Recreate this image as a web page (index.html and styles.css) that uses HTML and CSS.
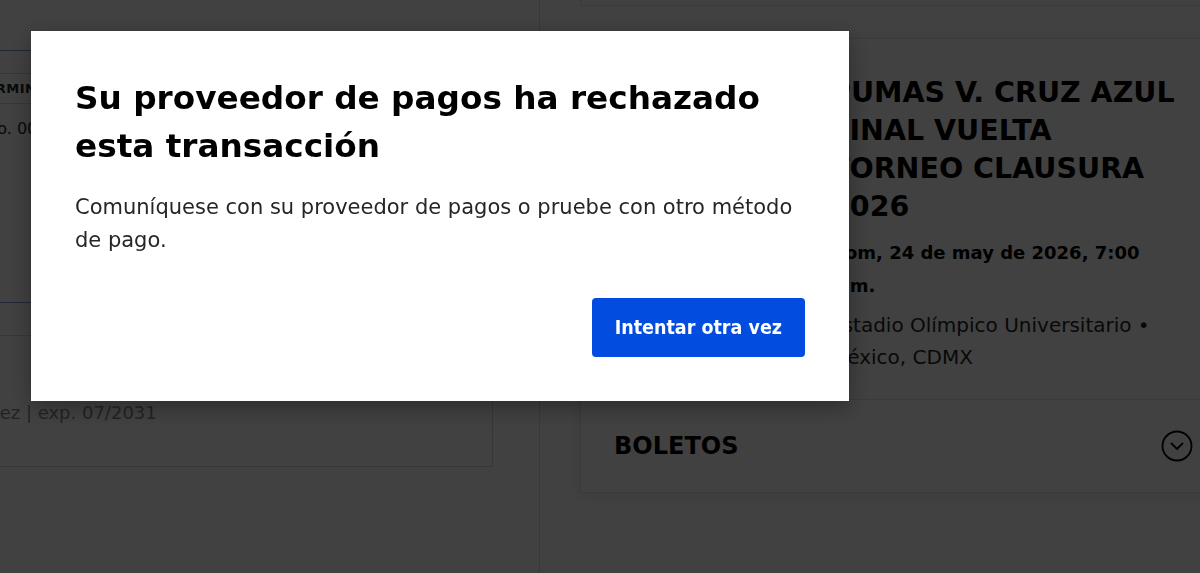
FILE: index.html
```html
<!DOCTYPE html>
<html lang="es">
<head>
<meta charset="utf-8">
<title>Pago</title>
<link rel="stylesheet" href="styles.css">
</head>
<body>
<div class="page">
  <section class="checkout">
    <div class="checkout-inner">
      <div class="pay-card pay-card--selected">
        <table class="card-table">
          <thead>
            <tr><th>Terminación</th><th>Titular</th></tr>
          </thead>
          <tbody>
            <tr><td>Nro. 0000 4242</td><td>Juan López</td></tr>
          </tbody>
        </table>
      </div>
      <div class="pay-card pay-card--saved">
        <p class="pay-meta">López | exp. 07/2031</p>
      </div>
    </div>
  </section>

  <aside class="summary">
    <div class="summary-top"></div>
    <article class="event-card">
      <div class="event-main">
        <div class="event-thumb"></div>
        <div class="event-info">
          <h1 class="event-title">Pumas v. Cruz Azul Final Vuelta Torneo Clausura 2026</h1>
          <p class="event-date">Dom, 24 de may de 2026, 7:00 p.m.</p>
          <p class="event-venue">Estadio Olímpico Universitario • México, CDMX</p>
        </div>
      </div>
      <div class="tickets-row">
        <span class="tickets-label">BOLETOS</span>
        <svg class="chevron-icon" viewBox="0 0 32 32" width="32" height="32" aria-hidden="true">
          <circle cx="16" cy="16" r="14.5" fill="none" stroke="#000" stroke-width="1.8"/>
          <polyline points="10.5,13.5 16,19 21.5,13.5" fill="none" stroke="#000" stroke-width="1.8" stroke-linecap="round" stroke-linejoin="round"/>
        </svg>
      </div>
    </article>
  </aside>
</div>

<div class="overlay">
  <div class="modal" role="dialog" aria-modal="true">
    <h2 class="modal-title">Su proveedor de pagos ha rechazado esta transacción</h2>
    <p class="modal-text">Comuníquese con su proveedor de pagos o pruebe con otro método de pago.</p>
    <div class="modal-actions">
      <button class="btn-primary" type="button">Intentar otra vez</button>
    </div>
  </div>
</div>
</body>
</html>
```

FILE: styles.css
```css
* {
  box-sizing: border-box;
}

body {
  margin: 0;
  height: 573px;
  overflow: hidden;
  background: #fff;
  color: #1f262d;
  font-family: "DejaVu Sans", "Liberation Sans", sans-serif;
}

p {
  margin: 0;
}

/* two-column checkout layout */
.page {
  display: grid;
  grid-template-columns: 540px 1fr;
  height: 573px;
}

.checkout {
  border-right: 1px solid #dcdcdc;
  overflow: hidden;
}

.checkout-inner {
  margin-left: -40px;
  width: 533px;
  padding-top: 50px;
}

.pay-card {
  border: 1px solid #d6d6d6;
  background: #fff;
}

.pay-card--selected {
  height: 253px;
  padding-top: 22px;
  border-color: #7d97dc;
}

.card-table {
  width: 100%;
  border-collapse: collapse;
}

.card-table th {
  height: 30px;
  padding: 0 0 0 16px;
  border-top: 1px solid #d6d6d6;
  border-bottom: 1px solid #d6d6d6;
  text-align: left;
  font-size: 13px;
  font-weight: 700;
  letter-spacing: 0.5px;
  text-transform: uppercase;
  color: #1f262d;
}

.card-table td {
  height: 50px;
  padding: 0 0 0 18px;
  font-size: 16px;
  color: #1f262d;
}

.pay-card--saved {
  margin-top: 32px;
  height: 132px;
  padding: 62px 0 0 6.5px;
}

.pay-meta {
  font-size: 18px;
  line-height: 30px;
  color: #8a8a8a;
}

/* event summary */
.summary {
  padding-left: 40px;
  overflow: hidden;
}

.summary-top {
  height: 6px;
  margin-right: -26px;
  border: 1px solid #e2e2e2;
  border-top: 0;
  background: #fff;
}

.event-card {
  margin-top: 32px;
  margin-right: -26px;
  border: 1px solid #e2e2e2;
  background: #fff;
  box-shadow: 0 2px 12px rgba(0, 0, 0, 0.12);
}

.event-main {
  display: grid;
  grid-template-columns: 193px 1fr;
  column-gap: 24px;
  padding: 35px 40px 26px 32px;
  border-bottom: 1px solid #e2e2e2;
}

.event-thumb {
  height: 130px;
  border-radius: 4px;
  background: #c9ced6;
}

.event-title {
  margin: 0;
  font-size: 28.5px;
  line-height: 38px;
  font-weight: 700;
  text-transform: uppercase;
  color: #000;
}

.event-date {
  margin-top: 10px;
  font-size: 18px;
  line-height: 33px;
  font-weight: 700;
  color: #000;
}

.event-venue {
  margin-top: 7px;
  font-size: 20px;
  line-height: 32px;
  color: #262626;
}

.tickets-row {
  display: flex;
  align-items: center;
  justify-content: space-between;
  height: 92px;
  padding: 0 32px 0 33px;
}

.tickets-label {
  font-size: 24px;
  font-weight: 700;
  color: #000;
}

.chevron-icon {
  display: block;
}

/* dialog */
.overlay {
  position: fixed;
  inset: 0;
  padding: 31px 0 0 31px;
  background: rgba(0, 0, 0, 0.745);
}

.modal {
  width: 818px;
  height: 370px;
  padding: 43px 44px 44px;
  background: #fff;
  box-shadow: 0 6px 22px rgba(0, 0, 0, 0.35);
}

.modal-title {
  margin: 0;
  font-size: 32.7px;
  line-height: 48px;
  font-weight: 700;
  color: #000;
}

.modal-text {
  margin-top: 21px;
  font-size: 21px;
  line-height: 33px;
  color: #262626;
}

.modal-actions {
  display: flex;
  justify-content: flex-end;
  margin-top: 41px;
}

.btn-primary {
  height: 59px;
  padding: 0 23px;
  border: 0;
  border-radius: 4px;
  background: #024ddf;
  color: #fff;
  font-family: "DejaVu Sans Condensed", "DejaVu Sans", sans-serif;
  font-size: 19.5px;
  font-weight: 700;
}
```
